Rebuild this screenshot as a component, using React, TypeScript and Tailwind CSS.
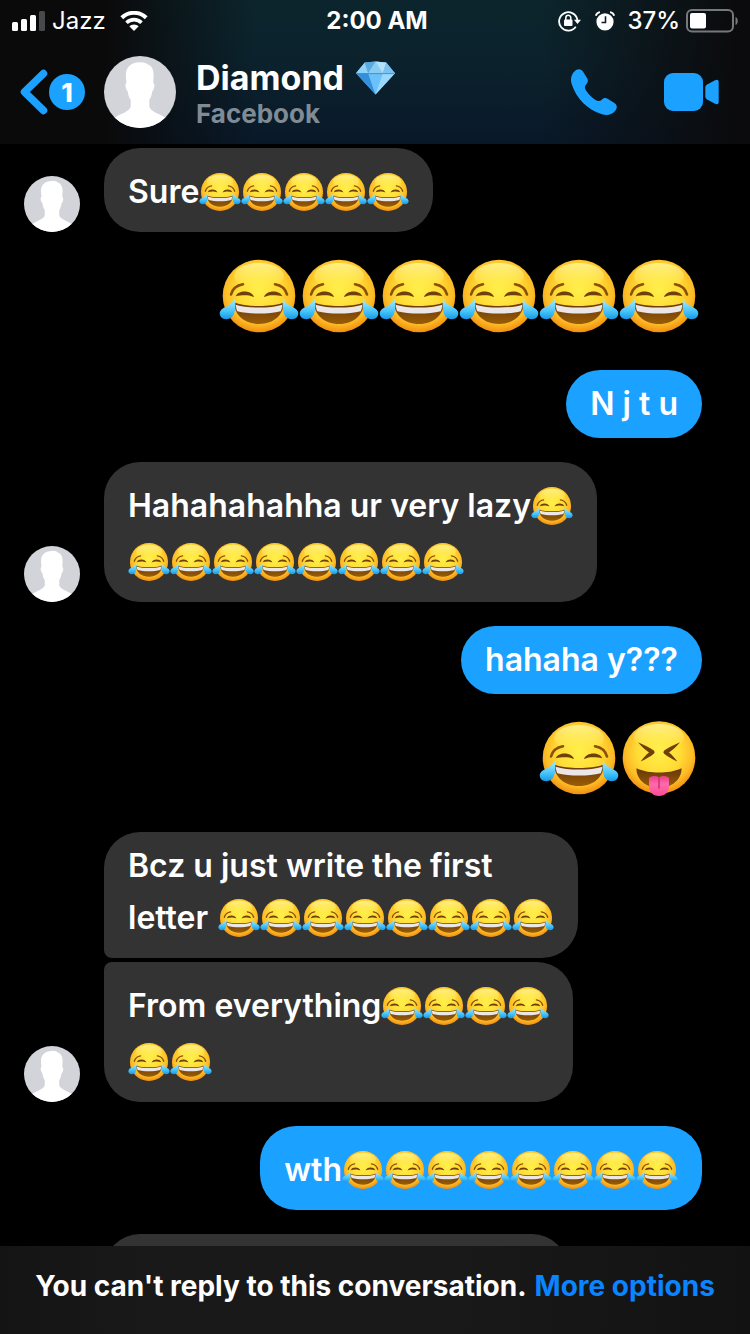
import type { ReactNode } from "react";

type Kind = "joy" | "tongue";

function EmojiDefs() {
  return (
    <svg className="absolute h-0 w-0" aria-hidden="true">
      <defs>
        <radialGradient id="face" cx="0.5" cy="0.42" r="0.6">
          <stop offset="0" stopColor="#fff04a" />
          <stop offset="0.5" stopColor="#ffdc35" />
          <stop offset="0.78" stopColor="#fdbb26" />
          <stop offset="1" stopColor="#ee860c" />
        </radialGradient>
        <linearGradient id="shine" x1="0" y1="0" x2="0" y2="1">
          <stop offset="0" stopColor="#fff9a8" stopOpacity="0.75" />
          <stop offset="1" stopColor="#fff766" stopOpacity="0" />
        </linearGradient>
        <linearGradient id="mouth" x1="0" y1="0" x2="0" y2="1">
          <stop offset="0" stopColor="#65360a" />
          <stop offset="1" stopColor="#9a5d06" />
        </linearGradient>
        <linearGradient id="tear" x1="0" y1="0" x2="0" y2="1">
          <stop offset="0" stopColor="#a8ecff" />
          <stop offset="0.6" stopColor="#48c4fa" />
          <stop offset="1" stopColor="#1598e6" />
        </linearGradient>
        <linearGradient id="tongue" x1="0" y1="0" x2="0" y2="1">
          <stop offset="0" stopColor="#e83f83" />
          <stop offset="0.4" stopColor="#ff6bab" />
          <stop offset="1" stopColor="#fb4b96" />
        </linearGradient>
        <symbol id="joy" viewBox="0 0 80 80">
          <circle cx="40" cy="40" r="36.3" fill="url(#face)" />
          <ellipse cx="40" cy="20" rx="25" ry="13" fill="url(#shine)" />
          <path d="M12 38.5C13.5 33 18 29.3 24 28.3" fill="none" stroke="#8a4f0a" strokeWidth="2.6" strokeLinecap="round" />
          <path d="M68 38.5C66.5 33 62 29.3 56 28.3" fill="none" stroke="#8a4f0a" strokeWidth="2.6" strokeLinecap="round" />
          <path d="M16.6 40.3C18 36.8 21.5 35.4 25.7 35.4S34 37.5 35 41C31.5 39.5 29 39.2 25.8 39.2S20 39.5 16.6 40.3Z" fill="#713f08" />
          <path d="M63.4 40.3C62 36.8 58.5 35.4 54.3 35.4S46 37.5 45 41C48.5 39.5 51 39.2 54.2 39.2S60 39.5 63.4 40.3Z" fill="#713f08" />
          <path d="M15.3 46.5C22 49.2 31 50 40 50S58 49.2 64.7 46.5C65 58 55.5 68 40 68S15 58 15.3 46.5Z" fill="url(#mouth)" />
          <path d="M16.8 48.7C23 50.8 31 51.6 40 51.6S57 50.8 63.2 48.7C63.2 51 62.7 53.2 61.7 55.2C55.5 56.8 48 57.5 40 57.5S24.5 56.8 18.3 55.2C17.3 53.2 16.8 51 16.8 48.7Z" fill="#ebe7e6" />
          <path d="M16 43C17 52 16.5 63 7.5 63.3C1 63.3-1 57.2 2.3 53.7C5 51 11.5 49.8 16 43Z" fill="url(#tear)" />
          <path d="M64 43C63 52 63.5 63 72.5 63.3C79 63.3 81 57.2 77.7 53.7C75 51 68.5 49.8 64 43Z" fill="url(#tear)" />
        </symbol>
        <symbol id="squint" viewBox="0 0 80 80">
          <circle cx="40" cy="39.5" r="36.3" fill="url(#face)" />
          <ellipse cx="40" cy="19" rx="25" ry="13" fill="url(#shine)" />
          <path d="M19 24.2C26 27 31 30 34.8 32.5Q36.6 34.2 34.8 35.8C31 38.8 27 41.2 21.7 43.4C24.5 39.5 27 36.8 30 34.4C26 31.5 22.5 28.5 19 24.2Z" fill="#713f08" />
          <path d="M61 24.2C54 27 49 30 45.2 32.5Q43.4 34.2 45.2 35.8C49 38.8 53 41.2 58.3 43.4C55.5 39.5 53 36.8 50 34.4C54 31.5 57.5 28.5 61 24.2Z" fill="#713f08" />
          <path d="M17.5 50.3C25 53.7 32 54.5 40 54.5S55 53.7 62.5 50.3C63 61 53 70 40 70S17 61 17.5 50.3Z" fill="url(#mouth)" />
          <path d="M30 60C33 57.5 37 57.5 40 59.5C43 57.5 47 57.5 50 60V68C50 74 46 78 40 78S30 74 30 68Z" fill="url(#tongue)" />
          <path d="M40 60V70" stroke="#cf2f72" strokeWidth="1.5" strokeLinecap="round" />
        </symbol>
      </defs>
    </svg>
  );
}

function Emoji({ kind = "joy", large = false }: { kind?: Kind; large?: boolean }) {
  return (
    <svg className={large ? "size-20 shrink-0" : "size-[42px] shrink-0"} role="img" aria-label={kind === "joy" ? "😂" : "😝"}>
      <use href={kind === "joy" ? "#joy" : "#squint"} />
    </svg>
  );
}

function Line({ text, joys = 0, spaced = false }: { text?: string; joys?: number; spaced?: boolean }) {
  return (
    <div className={`flex items-center ${joys > 0 ? "h-14 pt-1" : "h-10"} ${spaced ? "gap-2.5" : ""}`}>
      {text && <span className="whitespace-nowrap">{text}</span>}
      {joys > 0 && (
        <span className="flex">
          {Array.from({ length: joys }, (_, i) => (
            <Emoji key={i} />
          ))}
        </span>
      )}
    </div>
  );
}

function Avatar({ className }: { className: string }) {
  return (
    <svg viewBox="0 0 72 72" className={`${className} shrink-0 rounded-full`} aria-hidden="true">
      <rect width="72" height="72" fill="#d3d4da" />
      <path
        d="M36 6.3C40 6 42.5 7.2 44 8.6C48.500 10 50.200 15.500 49.500 22L49.200 27C51.300 27.500 50.500 33 48.200 35.500C47.800 39 46.800 42 45.300 44V50.500C46.200 55.500 55 57.500 61 61.500L66 66V73H6V66L11 61.500C17 57.500 25.800 55.500 26.700 50.500V44C25 42 24.200 39 23.800 35.500C21.500 33 20.500 27.500 22.500 27L22 22C21 13 25 6.500 36 6.300Z"
        fill="#fff"
      />
    </svg>
  );
}

function Received({ children, avatar = false, shape = "rounded-[36px]" }: { children: ReactNode; avatar?: boolean; shape?: string }) {
  return (
    <div className="flex items-end gap-6 pl-6">
      {avatar ? <Avatar className="size-14" /> : <div className="w-14 shrink-0" />}
      <div className={`${shape} bg-[#333333] px-6 py-3.5`}>{children}</div>
    </div>
  );
}

function Sent({ children }: { children: ReactNode }) {
  return (
    <div className="flex justify-end pr-12">
      <div className="rounded-[36px] bg-[#1ba1ff] px-6 py-3.5">{children}</div>
    </div>
  );
}

function BigEmojis({ kinds }: { kinds: Kind[] }) {
  return (
    <div className="flex justify-end pr-[51px] pb-2.5">
      {kinds.map((kind, i) => (
        <Emoji key={i} kind={kind} large />
      ))}
    </div>
  );
}

function StatusBar() {
  return (
    <div className="grid h-10 grid-cols-[1fr_auto_1fr] items-center px-3 pt-0.5 text-2xl text-white">
      <div className="flex items-center">
        <svg viewBox="0 0 34 20" className="h-5 w-[34px]" aria-hidden="true">
          <rect x="0" y="11" width="6" height="9" rx="1.500" fill="#fff" />
          <rect x="9" y="8" width="6" height="12" rx="1.500" fill="#fff" />
          <rect x="18" y="4" width="6" height="16" rx="1.500" fill="#fff" />
          <rect x="27" y="0" width="6" height="20" rx="1.500" fill="#48494b" />
        </svg>
        <span className="ml-1.5">Jazz</span>
        <svg viewBox="0 0 28 20" className="ml-3.5 h-5 w-7" aria-hidden="true">
          <path d="M1.800 6.800A17.500 17.500 0 0 1 26.200 6.800" fill="none" stroke="#fff" strokeWidth="4" />
          <path d="M6.500 11.700A10.800 10.800 0 0 1 21.500 11.700" fill="none" stroke="#fff" strokeWidth="3.600" />
          <path d="M14 20L9.300 15.300A6.800 6.800 0 0 1 18.700 15.300Z" fill="#fff" />
        </svg>
      </div>
      <span className="pl-1 font-bold">2:00 AM</span>
      <div className="flex items-center justify-end">
        <svg viewBox="0 0 23 22" className="h-[22px] w-[23px]" aria-hidden="true">
          <path d="M17.800 16.800A9.200 9.200 0 1 1 19.400 10" fill="none" stroke="#fff" strokeWidth="1.800" />
          <path d="M16 9.800H23L19.500 14Z" fill="#fff" />
          <rect x="6" y="9.500" width="8.500" height="6.500" rx="1" fill="#fff" />
          <path d="M7.800 10V8A2.500 2.700 0 0 1 12.800 8V10" fill="none" stroke="#fff" strokeWidth="1.500" />
        </svg>
        <svg viewBox="0 0 20 20" className="ml-3.5 size-5" aria-hidden="true">
          <circle cx="10" cy="10.800" r="8.600" fill="#fff" />
          <path d="M0.800 4.800A5 5 0 0 1 5 1.200M19.200 4.800A5 5 0 0 0 15 1.200" fill="none" stroke="#fff" strokeWidth="1.800" />
          <path d="M10.500 5.200V11.500H6.500" fill="none" stroke="#0b1f28" strokeWidth="1.600" />
        </svg>
        <span className="ml-3 font-medium">37%</span>
        <svg viewBox="0 0 52 24" className="ml-1.5 h-6 w-[52px]" aria-hidden="true">
          <rect x="1" y="1" width="46" height="21.500" rx="5" fill="none" stroke="#76797c" strokeWidth="2" />
          <rect x="4" y="4" width="16" height="15.500" rx="2" fill="#fff" />
          <path d="M49.500 8C52.500 9 52.500 15 49.500 16Z" fill="#76797c" />
        </svg>
      </div>
    </div>
  );
}

function Header() {
  return (
    <header className="shrink-0 bg-[linear-gradient(to_right,#0a0a0b_0%,#0a0a0b_14%,transparent_34%,transparent_72%,#0b0b0d_98%),linear-gradient(to_bottom,#0c252d_0%,#0b222c_45%,#091829_100%)]">
      <StatusBar />
      <div className="flex h-[104px] items-center pr-[31px] pl-5">
        <button type="button" aria-label="Back, 1 unread" className="flex items-center">
          <svg viewBox="0 0 29 46" className="h-[46px] w-[29px]" aria-hidden="true">
            <path d="M23.500 4.500L4.500 23L23.500 41.500" fill="none" stroke="#1ba1ff" strokeWidth="7.500" strokeLinecap="round" strokeLinejoin="round" />
          </svg>
          <span className="flex size-9 items-center justify-center rounded-full bg-[#1ba1ff] text-[26px] font-extrabold text-white">1</span>
        </button>
        <Avatar className="ml-[19px] size-[72px]" />
        <div className="ml-5 pt-1">
          <h1 className="flex items-center gap-3 text-[34px] leading-10 font-bold text-white">
            Diamond
            <svg viewBox="0 0 40 34" className="h-[34px] w-[39px]" role="img" aria-label="💎">
              <path d="M9 1L20 0L31 1L40 12L20 34L0 12Z" fill="#5db8f5" />
              <path d="M9 1L12.500 12H0Z" fill="#8fd3fa" />
              <path d="M9 1L20 0L12.500 12Z" fill="#5aa9df" />
              <path d="M20 0L27.500 12H12.500Z" fill="#8accf3" />
              <path d="M20 0L31 1L27.500 12Z" fill="#b4e2fb" />
              <path d="M31 1L40 12H27.500Z" fill="#79c3f2" />
              <path d="M0 12H12.500L20 34Z" fill="#368fdd" />
              <path d="M12.500 12H27.500L20 34Z" fill="#6bc2fb" />
              <path d="M27.500 12H40L20 34Z" fill="#9ad8fc" />
              <path d="M1 12.500H39" stroke="#3c93cf" strokeWidth="1" />
            </svg>
          </h1>
          <p className="text-[26px] leading-8 font-bold text-[#7f8b95]">Facebook</p>
        </div>
        <div className="ml-auto flex items-center gap-[46px]">
          <button type="button" aria-label="Call">
            <svg viewBox="0 0 48 48" className="size-12" aria-hidden="true">
              <path
                d="M5.500 2.500C8 0.500 11 0.700 12.800 3.200L17 10C18.500 12.500 18 14.500 16.300 16.200C14.500 18 14.400 20 16 22.500C18.500 26.300 21.800 29.500 25.500 32C28 33.500 30 33.500 31.800 31.700C33.500 30 35.500 29.500 38 31L44.800 35.200C47.300 37 47.500 40 45.500 42.500C42.500 46.300 37.500 48 32 46.300C17.500 41.800 6.200 30.500 1.700 16C0 10.500 1.700 5.500 5.500 2.500Z"
                fill="#1ba1ff"
              />
            </svg>
          </button>
          <button type="button" aria-label="Video call">
            <svg viewBox="0 0 55 38" className="h-[38px] w-[55px]" aria-hidden="true">
              <rect width="39" height="38" rx="9" fill="#1ba1ff" />
              <path d="M41.300 14.500Q41.300 12.800 42.700 11.700L51 7.200Q54.700 5.700 54.700 9V29Q54.700 32.300 51 30.800L42.700 26.300Q41.300 25.200 41.300 23.500Z" fill="#1ba1ff" />
            </svg>
          </button>
        </div>
      </div>
    </header>
  );
}

export default function App() {
  return (
    <div className="flex h-screen flex-col bg-black font-['Inter','Liberation_Sans',sans-serif]">
      <EmojiDefs />
      <Header />
      <main className="flex min-h-0 flex-1 flex-col gap-6 overflow-hidden pt-1 text-[32px] font-semibold text-white *:shrink-0">
        <Received avatar>
          <Line text="Sure" joys={5} />
        </Received>
        <BigEmojis kinds={["joy", "joy", "joy", "joy", "joy", "joy"]} />
        <Sent>
          <Line text="N j t u" />
        </Sent>
        <Received avatar>
          <Line text="Hahahahahha ur very lazy" joys={1} />
          <Line joys={8} />
        </Received>
        <Sent>
          <Line text="hahaha y???" />
        </Sent>
        <BigEmojis kinds={["joy", "tongue"]} />
        <div className="flex flex-col gap-1">
          <Received shape="rounded-[36px] rounded-bl-lg">
            <div className="flex flex-col gap-0.5">
              <Line text="Bcz u just write the first" />
              <Line text="letter" joys={8} spaced />
            </div>
          </Received>
          <Received avatar shape="rounded-[36px] rounded-tl-lg">
            <Line text="From everything" joys={4} />
            <Line joys={2} />
          </Received>
        </div>
        <Sent>
          <Line text="wth" joys={8} />
        </Sent>
        <Received>
          <div className="h-14 w-[416px]" />
        </Received>
      </main>
      <footer className="flex h-[88px] shrink-0 items-center justify-center gap-2 bg-[linear-gradient(to_right,#141414,#191919_20%,#191919_60%,#121212)] pb-2 text-[28px] font-bold whitespace-nowrap text-white">
        <p>You can't reply to this conversation.</p>
        <a href="#options" className="text-[#0a84ff]">More options</a>
      </footer>
    </div>
  );
}
